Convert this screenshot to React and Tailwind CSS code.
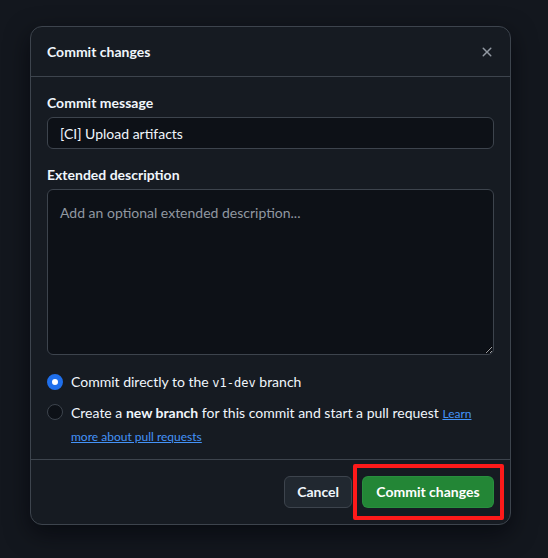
import React from "react";

const XIcon = () => (
  <svg width="16" height="16" viewBox="0 0 16 16" fill="currentColor">
    <path d="M3.72 3.72a.75.75 0 0 1 1.06 0L8 6.94l3.22-3.22a.749.749 0 0 1 1.275.326.749.749 0 0 1-.215.734L9.06 8l3.22 3.22a.749.749 0 0 1-.326 1.275.749.749 0 0 1-.734-.215L8 9.06l-3.22 3.22a.751.751 0 0 1-1.042-.018.751.751 0 0 1-.018-1.042L6.94 8 3.72 4.78a.75.75 0 0 1 0-1.06Z" />
  </svg>
);

const App = () => {
  return (
    <div
      className="h-[558px] w-[548px] bg-[#13171e] pl-[30px] pt-[26px] text-[#f0f6fc]"
      style={{ fontFamily: 'Lato, "Noto Sans", sans-serif' }}
    >
      {/* dialog */}
      <div className="w-[481px] rounded-xl border border-[#3d444d] bg-[#161b22] shadow-[0_8px_24px_rgba(1,4,9,0.6)]">
        {/* header */}
        <div className="flex h-[50px] items-center justify-between border-b border-[#3d444d] pl-4 pr-[11px]">
          <h1 className="text-sm font-bold">Commit changes</h1>
          <button className="flex h-6 w-6 items-center justify-center text-[#9198a1]">
            <XIcon />
          </button>
        </div>

        {/* body */}
        <div className="px-4 pt-4 pb-3 text-sm">
          <label className="block font-bold leading-5">Commit message</label>
          <input
            defaultValue="[CI] Upload artifacts"
            className="mt-1 block h-8 w-full rounded-md border border-[#3d444d] bg-[#0d1117] px-3 text-sm text-[#f0f6fc] outline-none"
          />

          <label className="mt-4 block font-bold leading-5">Extended description</label>
          <textarea
            placeholder="Add an optional extended description..."
            className="mt-1 block h-[166px] w-full rounded-md border border-[#3d444d] bg-[#0d1117] px-3 py-[13px] text-sm leading-5 text-[#f0f6fc] placeholder-[#9198a1] outline-none"
          />

          {/* radios */}
          <div className="mt-[17px] flex items-center gap-2 leading-5">
            <span className="h-4 w-4 shrink-0 rounded-full border-[5px] border-[#1f6feb] bg-white" />
            <span>
              Commit directly to the{" "}
              <code className="text-xs" style={{ fontFamily: '"DejaVu Sans Mono", monospace' }}>v1-dev</code> branch
            </span>
          </div>
          <div className="mt-[9px] flex items-start gap-2 leading-[23px]">
            <span className="mt-[3px] h-4 w-4 shrink-0 rounded-full border border-[#3d444d] bg-[#0d1117]" />
            <span>
              Create a <b className="font-bold">new branch</b> for this commit and start a pull request{" "}
              <a className="text-xs text-[#4493f8] underline">Learn more about pull requests</a>
            </span>
          </div>
        </div>

        {/* footer */}
        <div className="flex h-[65px] items-center justify-end gap-[10px] border-t border-[#3d444d] px-4">
          <button className="h-8 rounded-md border border-[#3d444d] bg-[#212830] px-3 text-sm font-bold">
            Cancel
          </button>
          <div className="relative">
            <button className="h-8 w-[132px] rounded-md border border-[#2f9e4a]/40 bg-[#238636] text-sm font-bold text-white">
              Commit changes
            </button>
            {/* annotation highlight */}
            <span className="pointer-events-none absolute -top-[12px] -bottom-[12px] -left-[9px] -right-[10px] border-4 border-[#ff1a1a] rounded-[2px]" />
          </div>
        </div>
      </div>
    </div>
  );
};

export default App;
